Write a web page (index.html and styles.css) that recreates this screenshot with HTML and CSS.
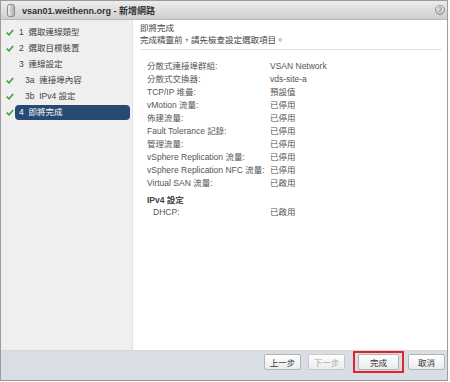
FILE: index.html
```html
<!DOCTYPE html>
<html lang="zh-Hant">

<head>
    <meta charset="UTF-8">
    <title>新增網路</title>
    <link rel="stylesheet" href="styles.css">
</head>

<body>

    <div class="window">
        <div class="titlebar">
            <svg class="app-icon" width="8" height="13" viewBox="0 0 8 13">
                <defs>
                    <linearGradient id="g1" x1="0" x2="1" y1="0" y2="0">
                        <stop offset="0" stop-color="#f4f4f4"/>
                        <stop offset="1" stop-color="#a8a8a8"/>
                    </linearGradient>
                </defs>
                <rect x="0.5" y="0.5" width="7" height="12" rx="2" fill="url(#g1)" stroke="#8a8a8a"/>
            </svg>
            <span class="title">vsan01.weithenn.org - 新增網路</span>
            <span class="help">?</span>
        </div>

        <div class="main">
            <ul class="steps">
                <li class="done"><span class="check"></span><span class="label">1 &nbsp;選取連線類型</span></li>
                <li class="done"><span class="check"></span><span class="label">2 &nbsp;選取目標裝置</span></li>
                <li><span class="check"></span><span class="label">3 &nbsp;連線設定</span></li>
                <li class="done"><span class="check"></span><span class="label sub">3a &nbsp;連接埠內容</span></li>
                <li class="done"><span class="check"></span><span class="label sub">3b &nbsp;IPv4 設定</span></li>
                <li class="done active"><span class="check"></span><span class="label">4 &nbsp;即將完成</span></li>
            </ul>

            <div class="content">
                <div class="head">
                    <div class="head-title">即將完成</div>
                    <div class="head-sub">完成精靈前，請先檢查設定選取項目。</div>
                </div>

                <div class="summary">
                    <span>分散式連接埠群組:</span><span>VSAN Network</span>
                    <span>分散式交換器:</span><span>vds-site-a</span>
                    <span>TCP/IP 堆疊:</span><span>預設值</span>
                    <span>vMotion 流量:</span><span>已停用</span>
                    <span>佈建流量:</span><span>已停用</span>
                    <span>Fault Tolerance 記錄:</span><span>已停用</span>
                    <span>管理流量:</span><span>已停用</span>
                    <span>vSphere Replication 流量:</span><span>已停用</span>
                    <span>vSphere Replication NFC 流量:</span><span>已停用</span>
                    <span>Virtual SAN 流量:</span><span>已啟用</span>
                    <span class="group">IPv4 設定</span><span></span>
                    <span class="indent">DHCP:</span><span>已啟用</span>
                </div>
            </div>
        </div>

        <div class="footer">
            <button>上一步</button>
            <button disabled>下一步</button>
            <span class="marker"><button class="finish">完成</button></span>
            <button>取消</button>
        </div>
    </div>

</body>

</html>
```

FILE: styles.css
```css
* {
    box-sizing: border-box;
    font-family: 'Liberation Sans', Arial, 'Noto Sans CJK TC', sans-serif;
}

body {
    margin: 0;
    background: #fff;
}

.window {
    width: 448px;
    height: 381px;
    border: 1px solid #9c9c9c;
    display: flex;
    flex-direction: column;
    background: #fff;
}

.titlebar {
    height: 19px;
    flex: none;
    display: flex;
    align-items: center;
    padding: 0 2px 0 6px;
    background: linear-gradient(#ececec, #cfcfcf);
    border-bottom: 1px solid #b8b8b8;
}

.app-icon {
    display: block;
    margin-right: 7px;
}

.title {
    flex: 1;
    font-size: 9px;
    font-weight: bold;
    color: #333;
}

.help {
    width: 10px;
    height: 10px;
    border-radius: 50%;
    background: linear-gradient(#f6f6f6, #bdbdbd);
    border: 1px solid #8f8f8f;
    font-size: 7px;
    line-height: 8px;
    text-align: center;
    color: #555;
}

.main {
    flex: 1;
    display: flex;
    min-height: 0;
}

.steps {
    width: 132px;
    flex: none;
    margin: 0;
    padding: 4px 0 0;
    list-style: none;
    background: #efefef;
    border-right: 1px solid #e2e2e2;
}

.steps li {
    height: 16px;
    display: flex;
    align-items: center;
}

.check {
    width: 10px;
    height: 8px;
    margin-left: 4px;
    flex: none;
}

.done .check {
    background: no-repeat center / 8px 7px url("data:image/svg+xml,%3Csvg xmlns='http://www.w3.org/2000/svg' viewBox='0 0 8 7'%3E%3Cpath d='M0.8 3.6 L3 5.8 L7.2 1' fill='none' stroke='%2340a040' stroke-width='1.6'/%3E%3C/svg%3E");
}

.label {
    flex: 1;
    height: 15px;
    line-height: 15px;
    margin-right: 2px;
    padding-left: 4px;
    border-radius: 4px;
    font-size: 8.5px;
    color: #444;
}

.label.sub {
    padding-left: 10px;
}

.active .label {
    background: #284a72;
    color: #fff;
}

.content {
    flex: 1;
    display: flex;
    flex-direction: column;
}

.head {
    margin: 0 5px 0 7px;
    padding-top: 2px;
    padding-bottom: 3px;
    border-bottom: 1px solid #e3e3e3;
    font-size: 8.5px;
    color: #444;
    line-height: 12px;
}

.summary {
    display: grid;
    grid-template-columns: 123px 1fr;
    grid-auto-rows: 13px;
    padding: 10px 0 0 14px;
    font-size: 8.5px;
    line-height: 13px;
    color: #555;
}

.summary .group {
    margin-top: 4px;
    font-weight: bold;
    color: #444;
    white-space: nowrap;
}

.summary .group + span {
    margin-top: 4px;
}

.summary .indent,
.summary .indent + span {
    margin-top: 3px;
}

.summary .indent {
    padding-left: 6px;
}

.footer {
    height: 30px;
    flex: none;
    display: flex;
    justify-content: flex-end;
    align-items: flex-start;
    gap: 7px;
    padding: 0 2px 0 0;
    background: #d9dde4;
    border-top: 1px solid #d2d6dd;
}

button {
    width: 37px;
    height: 16px;
    margin-top: 3px;
    padding: 0;
    border: 1px solid #b4b4b4;
    border-radius: 2px;
    background: linear-gradient(#ffffff, #ebebeb);
    font-size: 8.5px;
    color: #333;
}

button:disabled {
    color: #aaa;
    border-color: #c8c8c8;
}

.marker {
    display: flex;
    padding: 1px 3px;
    margin: 0 -3px 0 1px;
    border: 2px solid #e2232a;
}

.marker .finish {
    width: 41px;
    margin-top: 0;
}
```
